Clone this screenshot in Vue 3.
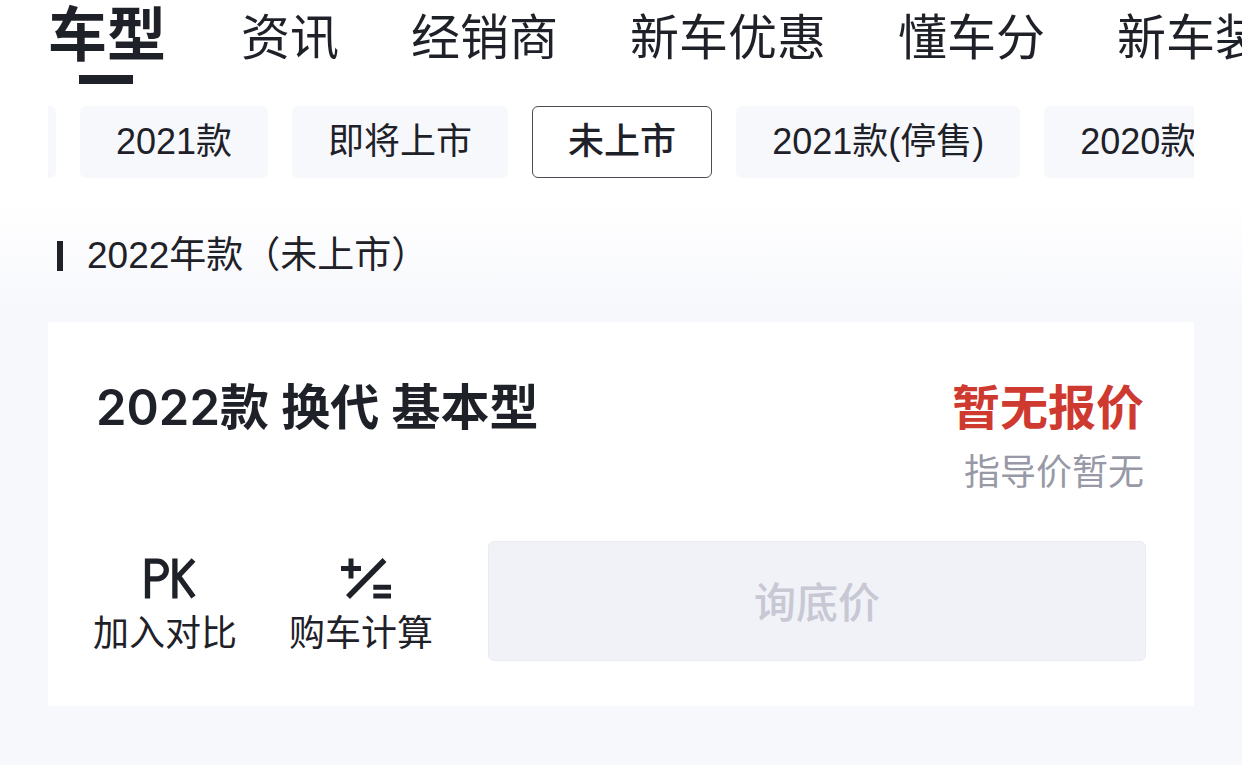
<script setup>
const tabs = ['车型', '资讯', '经销商', '新车优惠', '懂车分', '新车装备']
const years = ['2021款', '即将上市', '未上市', '2021款(停售)', '2020款']
</script>

<template>
  <main class="page">
    <header class="top">
      <nav class="tabs">
        <a v-for="(t, i) in tabs" :key="t" href="#" class="tab" :class="{ active: i === 0 }">{{ t }}</a>
      </nav>
      <div class="chips">
        <span class="chip-edge"></span>
        <button v-for="(y, i) in years" :key="y" type="button" class="chip" :class="{ selected: i === 2 }">{{ y }}</button>
      </div>
    </header>
    <h2 class="group">2022年款（未上市）</h2>
    <section class="card">
      <div class="info">
        <h3 class="name">2022款 换代 基本型</h3>
        <div class="price">
          <strong>暂无报价</strong>
          <span>指导价暂无</span>
        </div>
      </div>
      <div class="actions">
        <button type="button" class="tool">
          <svg width="56" height="44" viewBox="0 0 56 44" fill="none" stroke="#1f2129" stroke-width="5.300"><path d="M10.500 41.500V4.200H20.500a8.800 8.800 0 0 1 0 17.600H10.500M37.900 1.500v40M56.500 3L39.500 21M41 18.500L56.500 40" /></svg>
          <span>加入对比</span>
        </button>
        <button type="button" class="tool">
          <svg width="60" height="44" viewBox="-2 0 60 44" fill="none" stroke="#1f2129" stroke-width="5"><path d="M8 11.500h20M18 1.500v20M40.300 30.300h17.700M40.300 39h17.700" /><path d="M51.500 3L15 40" stroke-width="5.500" /></svg>
          <span>购车计算</span>
        </button>
        <button type="button" class="ask" disabled>询底价</button>
      </div>
    </section>
  </main>
</template>

<style>
body { margin: 0; background: #f7f8fc; }
</style>
<style scoped>
* { box-sizing: border-box; }
.page { font-family: Inter, "Noto Sans CJK SC", sans-serif; color: #1f2129; overflow: hidden; padding-bottom: 59px; background: linear-gradient(#fff 200px, #f7f8fc 310px); }
.tabs { display: flex; align-items: center; gap: 72px; height: 84px; padding-left: 48px; overflow: hidden; }
.tab { position: relative; flex: none; height: 84px; font-size: 49px; line-height: 76px; color: inherit; text-decoration: none; white-space: nowrap; }
.active { padding-right: 3px; font-size: 59px; line-height: 70px; font-weight: 700; }
.active::after { content: ""; position: absolute; left: 31px; bottom: 0; width: 54px; height: 9px; background: #1f2129; }
.chips { display: flex; gap: 24px; margin: 22px 48px 0; overflow: hidden; }
.chip-edge { flex: none; width: 8px; height: 72px; background: #f7f8fc; border-radius: 0 6px 6px 0; }
.chip { flex: none; height: 72px; padding: 0 36px; border: 0; border-radius: 6px; background: #f7f8fc; font-family: "Liberation Sans", "Noto Sans CJK SC", sans-serif; font-size: 36px; line-height: 72px; color: inherit; white-space: nowrap; }
.selected { padding: 0 35px; background: #fff; border: 1px solid #4b4c54; line-height: 70px; font-weight: 500; }
.group { display: flex; align-items: center; gap: 24px; margin: 54px 57px 0; height: 48px; font-size: 37px; line-height: 48px; font-weight: 400; font-family: "Liberation Sans", "Noto Sans CJK SC", sans-serif; }
.group::before { content: ""; width: 6px; height: 30px; background: #1f2129; }
.card { margin: 42px 48px 0; padding: 48px 48px 45px; background: #fff; }
.info { display: flex; justify-content: space-between; }
.name { margin: 0; font-size: 49px; line-height: 76px; font-weight: 600; }
.price { display: flex; flex-direction: column; align-items: flex-end; padding-right: 2px; }
.price strong { color: #cf3a30; font-size: 48px; line-height: 76px; font-weight: 700; }
.price span { color: #9899a6; font-size: 36px; line-height: 52px; }
.actions { display: flex; align-items: flex-end; gap: 52px; margin: 43px 0 0 -3px; }
.tool { display: flex; flex-direction: column; align-items: center; gap: 4px; width: 144px; padding: 0; border: 0; background: none; font: inherit; font-size: 36px; line-height: 56px; color: inherit; }
.tool svg { overflow: visible; }
.ask { flex: 1; height: 120px; margin-left: 3px; padding: 0 0 4px; border: 1px solid #ebecf2; border-radius: 6px; background: #f1f2f8; color: #c7c8d4; font: inherit; font-size: 42px; font-weight: 500; }
</style>
